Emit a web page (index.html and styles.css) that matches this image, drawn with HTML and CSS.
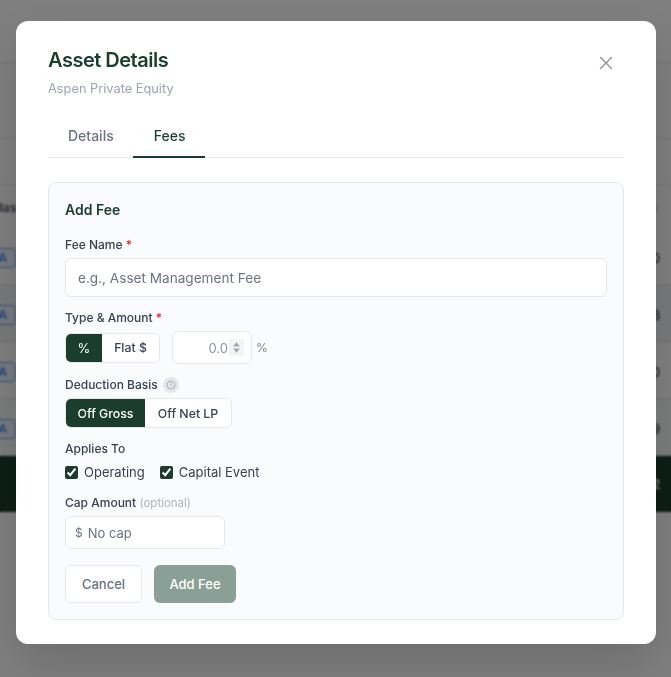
FILE: index.html
```html
<!DOCTYPE html>
<html lang="en">
<head>
<meta charset="utf-8">
<title>Asset Details</title>
<link rel="stylesheet" href="styles.css">
</head>
<body>
<div class="page">
  <div class="bar bar-top"></div>
  <div class="bar bar-sub"></div>
  <div class="bar bar-tools"></div>
  <div class="table">
    <div class="row row-head"><span class="head-cell">Class</span><span class="dot"></span></div>
    <div class="row"><span class="badge">LPA</span><span class="num">1,000</span></div>
    <div class="row row-alt"><span class="badge">LPA</span><span class="num">1,283</span></div>
    <div class="row"><span class="badge">LPA</span><span class="num">1,100</span></div>
    <div class="row row-alt2"><span class="badge">LPA</span><span class="num">1,209</span></div>
    <div class="row row-total"><span></span><span class="num">4,592</span></div>
  </div>
</div>
<div class="overlay">
  <div class="modal">
    <div class="modal-head">
      <div>
        <h2 class="title">Asset Details</h2>
        <p class="subtitle">Aspen Private Equity</p>
      </div>
      <button class="close" type="button" aria-label="Close">
        <svg viewBox="0 0 24 24" width="24" height="24" fill="none" stroke="currentColor" stroke-width="1.4" stroke-linecap="round"><path d="M6.5 6.5l11 11M17.5 6.5l-11 11"/></svg>
      </button>
    </div>
    <div class="tabs">
      <button class="tab" type="button">Details</button>
      <button class="tab tab-active" type="button">Fees</button>
    </div>
    <form class="card">
      <h3 class="card-title">Add Fee</h3>
      <div class="field field-name">
        <label class="label">Fee Name <span class="req">*</span></label>
        <input class="input input-name" type="text" placeholder="e.g., Asset Management Fee">
      </div>
      <div class="field field-type">
        <label class="label">Type &amp; Amount <span class="req">*</span></label>
        <div class="type-row">
          <div class="seg">
            <span class="seg-item seg-on seg-pct">%</span>
            <span class="seg-item seg-flat">Flat $</span>
          </div>
          <div class="amt">
            <input class="input input-amt" type="number" placeholder="0.0">
            <span class="spin"><svg viewBox="0 0 15 17" width="15" height="17"><path d="M7.5 3.2L11 7.4H4z" fill="#a3a8af"/><path d="M7.5 13.8L11 9.6H4z" fill="#a3a8af"/></svg></span>
          </div>
          <span class="unit">%</span>
        </div>
      </div>
      <div class="field field-basis">
        <label class="label label-info">Deduction Basis
          <span class="info"><svg viewBox="0 0 12 12" width="10" height="10" fill="none" stroke="currentColor" stroke-width="1"><circle cx="6" cy="6" r="4.8"/><path d="M6 3.4v3.2M6 7.8v.8"/></svg></span>
        </label>
        <div class="seg">
          <span class="seg-item seg-on seg-gross">Off Gross</span>
          <span class="seg-item seg-net">Off Net LP</span>
        </div>
      </div>
      <div class="field field-applies">
        <label class="label">Applies To</label>
        <div class="checks">
          <label class="check"><input type="checkbox" checked>Operating</label>
          <label class="check"><input type="checkbox" checked>Capital Event</label>
        </div>
      </div>
      <div class="field field-cap">
        <label class="label">Cap Amount <span class="opt">(optional)</span></label>
        <div class="input cap">
          <span class="cap-sign">$</span>
          <input class="cap-input" type="text" placeholder="No cap">
        </div>
      </div>
      <div class="actions">
        <button class="btn btn-cancel" type="button">Cancel</button>
        <button class="btn btn-add" type="button">Add Fee</button>
      </div>
    </form>
  </div>
</div>
</body>
</html>
```
FILE: styles.css
```css
* { box-sizing: border-box; }
html, body { margin: 0; height: 100%; overflow: hidden; }
body { background: #fff; font-family: Inter, "Liberation Sans", sans-serif; position: relative; }

.page { width: 100%; height: 677px; overflow: hidden; }
.bar { border-bottom: 1px solid #e5e7eb; }
.bar-top { height: 63px; }
.bar-sub { height: 76px; }
.bar-tools { height: 47px; }
.table { margin: 0 -12px; }
.row { display: flex; justify-content: space-between; align-items: center; height: 57px; padding-top: 3px; border-bottom: 1px solid #e5e7eb; font-size: 13px; color: #111; }
.row-head { height: 42px; padding-top: 0; border-bottom: 0; color: #374151; font-weight: 500; font-size: 12px; }
.row-alt { background: #f3f4f6; }
.row-alt2 { background: #f9fafb; }
.row-total { height: 56px; padding-top: 0; background: #1a3d2e; color: #fff; border-bottom: 0; font-weight: 600; }
.head-cell { margin-left: 3px; }
.dot { width: 12px; height: 12px; border-radius: 50%; background: #e5e7eb; margin-right: 24px; }
.badge { font-size: 12px; line-height: 14px; font-weight: 500; color: #3b82f6; background: #eff6ff; border: 1px solid #60a5fa; border-radius: 4px; padding: 2px 8px; margin-left: -12px; }
.num { margin-right: 23px; }

.overlay { position: absolute; inset: 0; padding: 21px 15px 33px 16px; background: rgba(0, 0, 0, .5); backdrop-filter: blur(1px); }
.modal { width: 640px; height: 623px; background: #fff; border-radius: 12px; padding: 27px 32px 24px; box-shadow: 0 20px 50px rgba(0, 0, 0, .15); }
.modal-head { display: flex; justify-content: space-between; align-items: flex-start; height: 56px; }
.title { margin: 0; font-size: 20px; line-height: 24px; font-weight: 600; color: #1a3d2e; letter-spacing: -.025em; }
.subtitle { margin: 9px 0 0; font-size: 12.8px; line-height: 16px; color: #9ca3af; }
.close { border: 0; background: none; padding: 0; margin: 3px 6px 0 0; width: 24px; height: 24px; color: #8b8f96; }
.close svg { display: block; }

.tabs { display: flex; height: 54px; padding-top: 21px; border-bottom: 1px solid #e5e7eb; }
.tab { border: 0; background: none; font-family: inherit; font-size: 14px; font-weight: 500; color: #6b7280; padding: 0 20px 9px; height: 33px; margin-bottom: -1px; line-height: 20px; border-bottom: 2px solid transparent; }
.tab-active { color: #1a3d2e; border-bottom-color: #1a3d2e; margin-left: -1px; padding-left: 21px; }

.card { margin-top: 24px; height: 438px; background: #fafbfc; border: 1px solid #e5e7eb; border-radius: 8px; padding: 16px; }
.card-title { margin: 0; font-size: 14px; line-height: 22px; font-weight: 600; color: #1a3d2e; }
.field { display: flex; flex-direction: column; align-items: flex-start; }
.label { font-size: 12px; line-height: 16px; font-weight: 500; color: #374151; }
.req { color: #dc2626; }
.opt { font-size: 11.5px; font-weight: 400; color: #b0b5bc; }
.field-name { margin-top: 16px; gap: 5px; }
.input { border: 1px solid #e5e7eb; border-radius: 6px; background: #fff; font-family: inherit; font-size: 14px; color: #111827; outline: 0; }
.input::placeholder, .cap-input::placeholder { color: #6b7280; opacity: 1; }
.input-name { width: 100%; height: 39px; padding: 0 12px; font-size: 13.6px; }
.field-type { margin-top: 13px; gap: 5px; }
.type-row { display: flex; align-items: center; gap: 12px; }
.seg { display: flex; height: 30px; border: 1px solid #e5e7eb; border-radius: 6px; background: #fff; overflow: hidden; font-size: 12.3px; font-weight: 500; color: #374151; }
.seg-item { display: flex; align-items: center; justify-content: center; }
.seg-on { background: #1a3d2e; color: #fff; }
.seg-pct { width: 36px; font-size: 13px; font-weight: 400; }
.seg-flat { width: 57px; }
.seg-gross { width: 79px; }
.seg-net { width: 86px; }
.amt { position: relative; display: flex; }
.input-amt { width: 80px; height: 33px; padding: 0 23px 0 8px; text-align: right; font-size: 13px; appearance: textfield; }
.input-amt::placeholder { color: #8f959d; }
.input-amt::-webkit-inner-spin-button { display: none; }
.spin { position: absolute; right: 8px; top: 8px; width: 15px; height: 17px; background: #f3f4f6; }
.spin svg { display: block; }
.unit { margin-left: -8px; font-size: 12px; color: #7b818b; }
.field-basis { margin-top: 13px; gap: 5px; }
.label-info { display: flex; align-items: center; gap: 5px; height: 16px; }
.info { display: flex; align-items: center; justify-content: center; width: 16px; height: 16px; border-radius: 50%; background: #e5e7eb; color: #9ca3af; }
.field-applies { margin-top: 13px; gap: 7px; }
.checks { display: flex; gap: 15px; }
.check { display: flex; align-items: center; gap: 6px; font-size: 13px; line-height: 16px; color: #374151; }
.check input { margin: 0; width: 13px; height: 13px; accent-color: #1a3d2e; }
.field-cap { margin-top: 14px; gap: 5px; }
.field-cap .label { margin-top: 1px; }
.cap { display: flex; align-items: center; gap: 5px; width: 160px; height: 33px; padding: 0 9px; }
.cap-sign { font-size: 12px; color: #6b7280; }
.cap-input { flex: 1; min-width: 0; border: 0; padding: 0; outline: 0; background: none; font-family: inherit; font-size: 13px; }
.actions { display: flex; gap: 12px; margin-top: 16px; }
.btn { height: 38px; border-radius: 6px; font-family: inherit; font-size: 13px; font-weight: 500; }
.btn-cancel { width: 77px; background: #fff; border: 1px solid #e5e7eb; color: #6b7280; }
.btn-add { width: 82px; background: #8a9f96; border: 0; color: #fff; }
```
